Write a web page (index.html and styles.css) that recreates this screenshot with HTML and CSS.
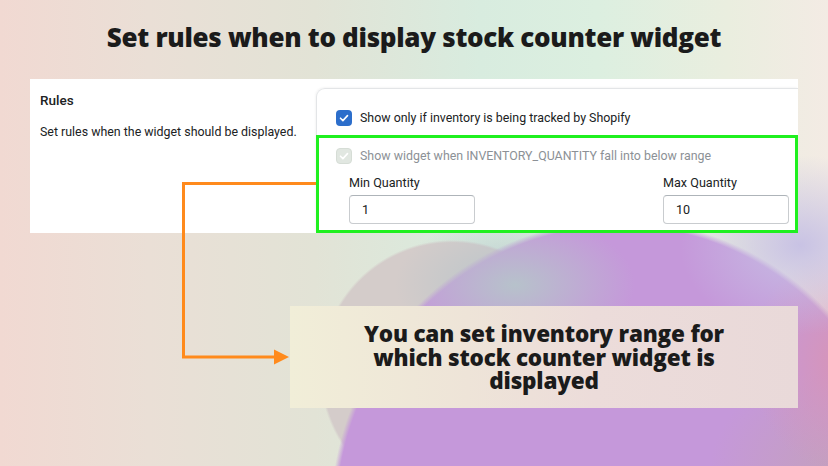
FILE: index.html
```html
<!DOCTYPE html>
<html>
<head>
<meta charset="utf-8">
<link rel="stylesheet" href="styles.css">
</head>
<body>
<h1 class="title">Set rules when to display stock counter widget</h1>
<section class="panel">
  <div class="intro">
    <h2 class="intro-title">Rules</h2>
    <p class="intro-text">Set rules when the widget should be displayed.</p>
  </div>
  <div class="card">
    <label class="check-row">
      <span class="box box-on"><svg viewBox="0 0 16 16" width="16" height="16"><path d="M4.5 8.2l2.4 2.4 4.6-5" fill="none" stroke="#fff" stroke-width="1.6" stroke-linecap="round" stroke-linejoin="round"/></svg></span>
      <span class="check-text">Show only if inventory is being tracked by Shopify</span>
    </label>
    <div class="highlight">
      <label class="check-row check-row-sub">
        <span class="box box-off"><svg viewBox="0 0 16 16" width="16" height="16"><path d="M4.5 8.2l2.4 2.4 4.6-5" fill="none" stroke="#fff" stroke-width="1.6" stroke-linecap="round" stroke-linejoin="round"/></svg></span>
        <span class="check-text muted">Show widget when INVENTORY_QUANTITY fall into below range</span>
      </label>
      <div class="fields">
        <div class="field">
          <div class="field-label">Min Quantity</div>
          <div class="input">1</div>
        </div>
        <div class="field">
          <div class="field-label">Max Quantity</div>
          <div class="input">10</div>
        </div>
      </div>
    </div>
  </div>
</section>
<div class="callout">You can set inventory range for<br>which stock counter widget is<br>displayed</div>
<svg class="arrow" viewBox="0 0 828 466" width="828" height="466">
  <path d="M316 183.5 H183.5 V357 H277" fill="none" stroke="#ff8a1c" stroke-width="3"/>
  <polygon points="274,349.5 289,357 274,364.5" fill="#ff8a1c"/>
</svg>
</body>
</html>
```
FILE: styles.css
```css
html, body {
  margin: 0;
  padding: 0;
}
body {
  width: 828px;
  height: 466px;
  overflow: hidden;
  position: relative;
  font-family: Roboto, "Liberation Sans", sans-serif;
  color: #202223;
  background:
    radial-gradient(ellipse 120px 70px at 515px 285px, rgba(182,196,202,0.95), rgba(182,196,202,0) 100%),
    radial-gradient(ellipse 120px 90px at 800px 245px, rgba(198,192,228,0.95), rgba(198,192,228,0) 100%),
    radial-gradient(ellipse 90px 110px at 840px 360px, rgba(218,148,178,0.85), rgba(218,148,178,0) 100%),
    radial-gradient(ellipse 120px 100px at 830px 470px, rgba(196,162,184,0.8), rgba(196,162,184,0) 100%),
    radial-gradient(ellipse 290px 300px at 620px 520px, #c598da 0 98%, rgba(197,152,218,0) 100%),
    radial-gradient(circle 132px at 452px 372px, #d4ccca 0 98%, rgba(212,204,202,0) 100%),
    linear-gradient(90deg, #f1d9d2 0%, #eadfd6 18%, #e2e3d6 38%, #d8ecdf 58%, #dcefe0 72%, #eaeedf 88%, #f3ebe4 100%);
}
.title {
  margin: 0;
  padding-top: 22px;
  height: 30px;
  line-height: 30px;
  text-align: center;
  font-family: "Open Sans", "Liberation Sans", sans-serif;
  font-weight: 800;
  font-size: 26px;
  color: #1b1b1b;
  letter-spacing: -0.3px;
}
.panel {
  display: flex;
  margin: 27px 0 0 30px;
  width: 768px;
  height: 154px;
  background: #ffffff;
}
.intro {
  width: 266px;
  padding: 11px 10px 0;
  white-space: nowrap;
}
.intro-title {
  margin: 0;
  font-size: 13.5px;
  line-height: 20px;
  font-weight: 500;
}
.intro-text {
  margin: 12px 0 0;
  font-size: 12.4px;
  line-height: 20px;
}
.card {
  flex: 1;
  margin-top: 9px;
  border-top: 1px solid #e3e5e7;
  border-left: 1px solid #e3e5e7;
  border-top-left-radius: 9px;
  box-shadow: -1px -1px 2px rgba(0,0,0,0.04);
  display: flex;
  flex-direction: column;
}
.check-row {
  display: flex;
  align-items: center;
  height: 20px;
  margin-top: 19px;
  padding-left: 19px;
}
.check-row-sub {
  margin-top: 8px;
  padding-left: 17px;
}
.box {
  width: 16px;
  height: 16px;
  border-radius: 4px;
  box-sizing: border-box;
  display: flex;
  margin-right: 8px;
}
.box-on {
  background: #2c6ecb;
}
.box-off {
  background: #e1e7e1;
  border: 1px solid #d6ddd6;
}
.box-off svg {
  margin: -1px;
}
.check-text {
  font-size: 12.4px;
  line-height: 20px;
}
.muted {
  color: #8c9196;
}
.highlight {
  margin: 7px 0 0 -1px;
  height: 98px;
  box-sizing: border-box;
  border: 3px solid #1ff01f;
}
.fields {
  display: flex;
  justify-content: space-between;
  margin-top: 8px;
  padding: 0 6px 0 30px;
}
.field {
  width: 126px;
}
.field-label {
  font-size: 12.6px;
  line-height: 18px;
  margin-bottom: 3px;
}
.input {
  height: 29px;
  box-sizing: border-box;
  border: 1px solid #c9cccf;
  border-top-color: #aeb4b9;
  border-radius: 4px;
  padding-left: 12px;
  font-size: 12.6px;
  line-height: 27px;
}
.callout {
  margin: 73px 0 0 290px;
  width: 508px;
  height: 102px;
  box-sizing: border-box;
  padding-top: 16px;
  text-align: center;
  font-family: "Open Sans", "Liberation Sans", sans-serif;
  font-weight: 800;
  font-size: 22.5px;
  line-height: 23.5px;
  letter-spacing: -0.2px;
  color: #1b1b1b;
  background: linear-gradient(90deg, #f1eed8 0%, #eee4d8 35%, #ecdcda 60%, #e9d9d9 100%);
}
.arrow {
  position: absolute;
  left: 0;
  top: 0;
  pointer-events: none;
}
```
